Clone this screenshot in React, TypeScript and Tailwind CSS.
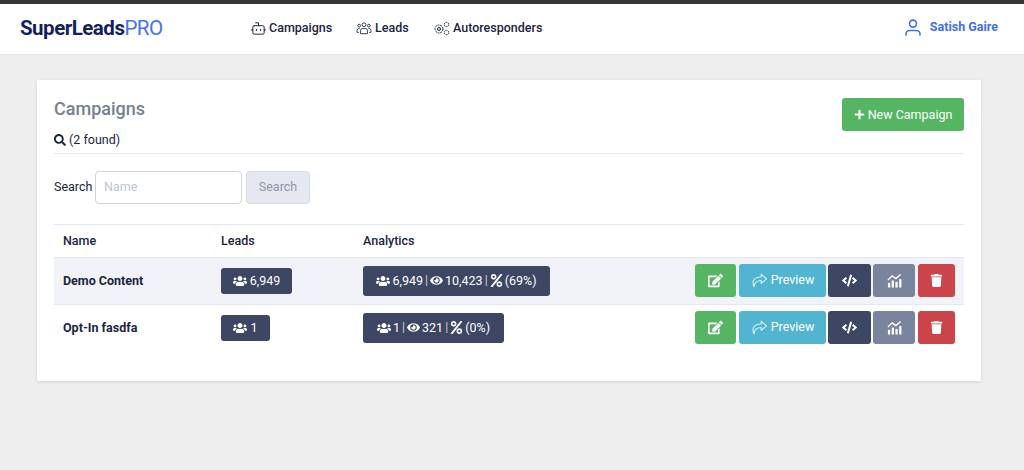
import { FaUsers, FaEye, FaPercent, FaEdit, FaCode, FaTrash, FaSearch, FaPlus } from "react-icons/fa";
import { Bot } from "lucide-react";

function ShareOutline() {
  return (
    <svg width="17" height="15" viewBox="0 0 20 18" fill="none" stroke="currentColor" strokeWidth="1.3" strokeLinejoin="round" className="opacity-80">
      <path d="M12 1.5 18.5 7 12 12.5V9C7.5 9 4 10.5 3.5 16.5 1 12 1.5 5 12 4.8Z" />
    </svg>
  );
}

function ChartIcon() {
  return (
    <svg width="15" height="15" viewBox="0 0 16 15" fill="currentColor">
      <rect x="1" y="10" width="2.4" height="5" />
      <rect x="5" y="7.5" width="2.4" height="7.5" />
      <rect x="9" y="9" width="2.4" height="6" />
      <rect x="13" y="6" width="2.4" height="9" />
      <path d="M1 7 5.5 2.5 9.5 5.5 14.5 1" fill="none" stroke="currentColor" strokeWidth="1.5" />
    </svg>
  );
}

function PeopleIcon() {
  return (
    <svg width="16" height="13" viewBox="0 0 18 15" fill="none" stroke="currentColor" strokeWidth="1">
      <circle cx="9" cy="3.2" r="2.2" />
      <circle cx="3.4" cy="4.2" r="1.6" />
      <circle cx="14.6" cy="4.2" r="1.6" />
      <path d="M5 13.5V10a2.5 2.5 0 0 1 2.5-2.5h3A2.5 2.5 0 0 1 13 10v3.5Z" />
      <path d="M3 12H1V9.5A2 2 0 0 1 3 7.5h1M15 12h2V9.5a2 2 0 0 0-2-2h-1" />
    </svg>
  );
}

function GearsIcon() {
  return (
    <svg width="17" height="15" viewBox="0 0 17 15" fill="none" stroke="currentColor" strokeWidth="1">
      <circle cx="6" cy="8" r="4" strokeDasharray="2 0.8" />
      <circle cx="6" cy="8" r="1.5" />
      <circle cx="13.5" cy="3.5" r="2.2" strokeDasharray="1.5 0.6" />
      <circle cx="13.5" cy="11.5" r="2.2" strokeDasharray="1.5 0.6" />
    </svg>
  );
}

function UserIcon() {
  return (
    <svg width="16" height="17" viewBox="0 0 16 17" fill="none" stroke="currentColor" strokeWidth="1.6" strokeLinecap="round">
      <circle cx="8" cy="4.6" r="3.5" />
      <path d="M1 16v-1a3.5 3.5 0 0 1 3.5-3.5h7A3.5 3.5 0 0 1 15 15v1" />
    </svg>
  );
}

function Badge({ children, className }: { children: React.ReactNode; className: string }) {
  return (
    <span className={`inline-flex items-center justify-center bg-[#3d4663] text-white text-[12.5px] rounded-[3px] ${className}`}>
      {children}
    </span>
  );
}

function Actions() {
  const base = "h-[33px] flex items-center justify-center rounded-[3px] text-white";
  return (
    <div className="flex items-center text-[12.5px]">
      <div className={`${base} w-[41px] bg-[#55b563]`}><FaEdit size={15} /></div>
      <div className={`${base} ml-[3px] w-[87px] gap-[3px] bg-[#51b4d1]`}><ShareOutline /><span className="pt-[1px]">Preview</span></div>
      <div className={`${base} ml-[2px] w-[43px] bg-[#3d4663]`}><FaCode size={15} /></div>
      <div className={`${base} ml-[2px] w-[42px] bg-[#7b849d]`}><ChartIcon /></div>
      <div className={`${base} ml-[3px] w-[37px] bg-[#cb444a]`}><FaTrash size={13} /></div>
    </div>
  );
}

function Row({ name, leads, leadsW, a, aW, shaded }: { name: string; leads: string; leadsW: string; a: [string, string, string]; aW: string; shaded?: boolean }) {
  return (
    <div className={`h-[47px] flex items-center border-t border-[#e6e8f0] ${shaded ? "bg-[#f2f3f8]" : ""}`}>
      <div className="w-[167px] pl-[9px] text-[12.5px] font-bold text-[#1a2540]">{name}</div>
      <div className="w-[142px] flex mb-[1px]">
        <Badge className={`h-[26px] gap-[3px] ${leadsW}`}><FaUsers size={14} /><span className="pt-[1px]">{leads}</span></Badge>
      </div>
      <div className="flex-1 flex mb-[1px]">
        <Badge className={`h-[30px] gap-[2px] ${aW}`}>
          <FaUsers size={14} /><span className="pt-[1px]">{a[0]}</span><span className="opacity-70">|</span><FaEye size={13} /><span className="pt-[1px]">{a[1]}</span><span className="opacity-70">|</span><FaPercent size={13} /><span className="pt-[1px]">{a[2]}</span>
        </Badge>
      </div>
      <div className="pr-[9px] mb-[2px]"><Actions /></div>
    </div>
  );
}

export default function App() {
  return (
    <div className="w-[1024px] h-[470px] overflow-hidden bg-[#eeeeee] text-[#1a2540] font-['Roboto','Liberation_Sans',sans-serif]">
      <div className="h-[4px] bg-[#333539]" />
      <header className="h-[51px] bg-white border-b border-[#e3e3e6] flex items-center">
        <div className="w-[250px] pl-[20px] pb-[2px] text-[20.5px] tracking-[-0.5px] text-[#141f5c]">
          <span className="font-bold">SuperLeads</span><span className="text-[#3f74ef]">PRO</span>
        </div>
        <nav className="flex items-center text-[12.5px] font-medium text-[#1a2540] pb-[2px]">
          <div className="flex items-center gap-[2px] w-[106px]"><Bot size={17} strokeWidth={1.4} />Campaigns</div>
          <div className="flex items-center gap-[3px] w-[77px]"><PeopleIcon />Leads</div>
          <div className="flex items-center gap-[3px]"><GearsIcon />Autoresponders</div>
        </nav>
        <div className="ml-auto pr-[26px] flex items-center gap-[9px] text-[12.5px] font-bold text-[#3f6fef] pb-[4px]">
          <UserIcon />Satish Gaire
        </div>
      </header>
      <main className="ml-[37px] mt-[25px] w-[944px] h-[301px] bg-white shadow-[0_1px_3px_rgba(0,0,0,0.12)] px-[17px]">
        <div className="h-[74px] flex justify-between border-b border-[#e9eaf0]">
          <div>
            <h1 className="pt-[17px] text-[18px] leading-[24px] font-medium text-[#76818d]">Campaigns</h1>
            <div className="mt-[11px] flex items-center gap-[3px] text-[12.5px] leading-[16px]"><FaSearch size={12} />(2 found)</div>
          </div>
          <div className="pt-[18px]">
            <div className="w-[122px] h-[33px] rounded-[3px] bg-[#55b563] text-white text-[12.5px] flex items-center justify-center gap-[3px]"><FaPlus size={11} /><span className="pt-[1px]">New Campaign</span></div>
          </div>
        </div>
        <div className="h-[70px] flex items-center pb-[3px] text-[12.5px]">
          <span className="w-[41px]">Search</span>
          <div className="w-[147px] h-[33px] flex items-center pl-[8px] rounded-[4px] border border-[#ced4e2] text-[#bcc5d6]">Name</div>
          <div className="ml-[4px] w-[64px] h-[33px] flex items-center justify-center rounded-[4px] border border-[#d6dbe8] bg-[#e5e8f1] text-[#8d96a6]">Search</div>
        </div>
        <div className="h-[33px] flex items-center border-t border-[#e6e8f0] text-[12.5px] font-medium">
          <div className="w-[167px] pl-[9px]">Name</div>
          <div className="w-[142px]">Leads</div>
          <div>Analytics</div>
        </div>
        <Row shaded name="Demo Content" leads="6,949" leadsW="w-[71px]" a={["6,949", "10,423", "(69%)"]} aW="w-[187px]" />
        <Row name="Opt-In fasdfa" leads="1" leadsW="w-[49px]" a={["1", "321", "(0%)"]} aW="w-[141px]" />
      </main>
    </div>
  );
}
